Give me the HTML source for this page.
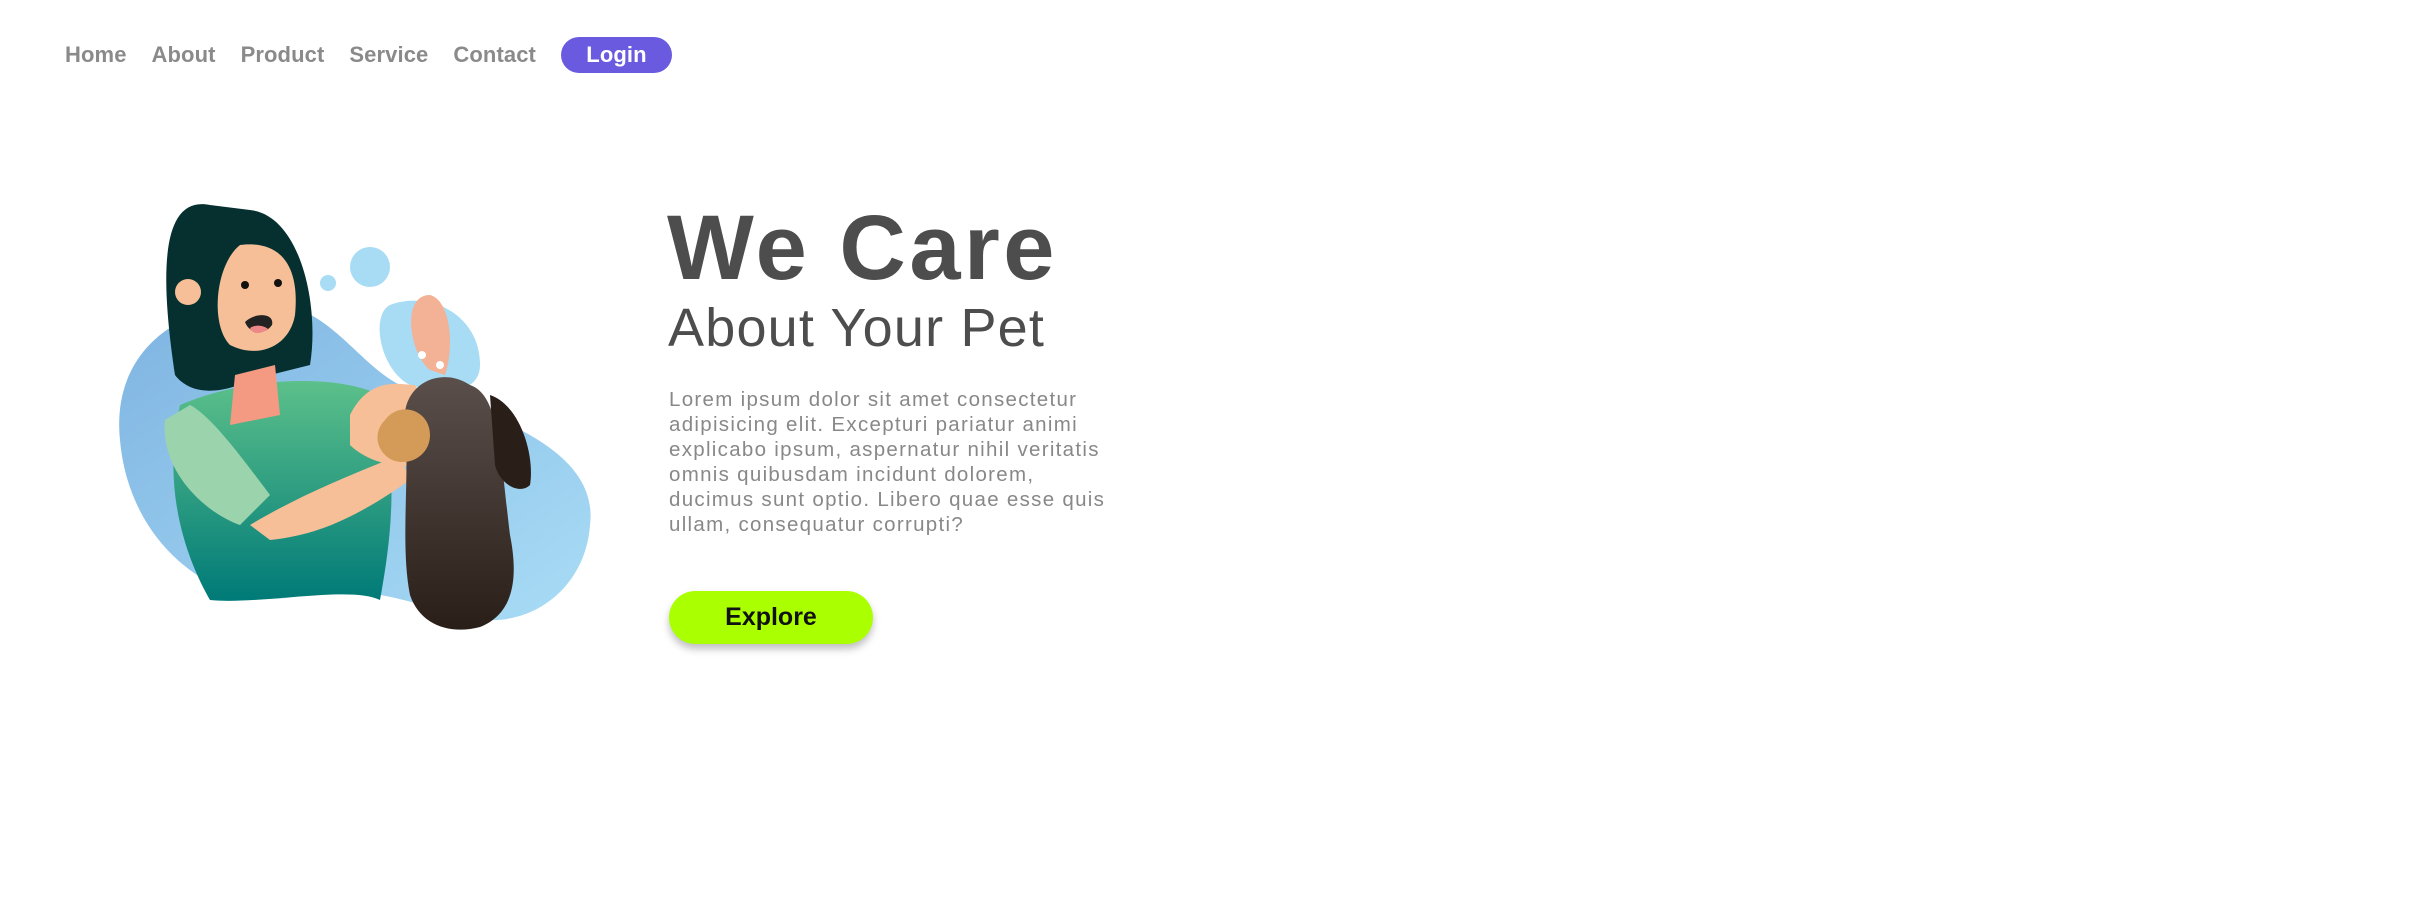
<!DOCTYPE html>
<html><head><meta charset="utf-8"><style>
*{margin:0;padding:0;box-sizing:border-box}
body{width:2428px;height:911px;background:#fff;font-family:"Liberation Sans",sans-serif;position:relative;overflow:hidden}
nav{position:absolute;left:65px;top:37px;height:36px;display:flex;align-items:center;gap:25px;font-size:22px;font-weight:bold;color:#8a8a8a;letter-spacing:0.1px}
nav .login{background:#6a5ae0;color:#fff;border-radius:18px;width:111px;height:36px;display:flex;align-items:center;justify-content:center}
h1{position:absolute;left:667px;top:198px;font-size:92px;font-weight:900;color:#4d4d4d;letter-spacing:3.5px;line-height:100px}
h2{position:absolute;left:668px;top:296px;font-size:54px;font-weight:normal;color:#4d4d4d;line-height:64px;letter-spacing:1.2px}
p{position:absolute;left:669px;top:387px;width:450px;font-size:20.5px;line-height:25px;color:#888;letter-spacing:1.3px}
.btn{position:absolute;left:669px;top:591px;width:204px;height:53px;border-radius:27px;background:#aaff00;box-shadow:0 5px 8px rgba(0,0,0,.25);font-weight:bold;font-size:25px;display:flex;align-items:center;justify-content:center;color:#111}
svg{position:absolute;left:100px;top:195px}
</style></head><body>
<nav><span>Home</span><span>About</span><span>Product</span><span>Service</span><span>Contact</span><span class="login">Login</span></nav>
<svg width="500" height="440" viewBox="0 0 500 440">
<defs><linearGradient id="b" x1="0" y1="0" x2="1" y2="1"><stop offset="0" stop-color="#7fb4e2"/><stop offset="1" stop-color="#a8dcf5"/></linearGradient>
<linearGradient id="g" x1="0" y1="0" x2="0" y2="1"><stop offset="0" stop-color="#5cc08a"/><stop offset="1" stop-color="#007a78"/></linearGradient>
<linearGradient id="d" x1="0" y1="0" x2="0" y2="1"><stop offset="0" stop-color="#5a4f4b"/><stop offset="1" stop-color="#2a1e18"/></linearGradient></defs>
<path d="M20 245 C10 150 90 100 180 110 C230 115 260 170 300 190 C380 215 500 250 490 330 C485 400 420 440 360 420 C300 405 270 390 200 400 C130 420 30 360 20 245Z" fill="url(#b)"/>
<path d="M290 110 C330 95 380 120 380 170 C380 200 340 200 310 190 C280 175 270 120 290 110Z" fill="#a8dcf5"/>
<circle cx="270" cy="72" r="20" fill="#a8dcf5"/><circle cx="228" cy="88" r="8" fill="#a8dcf5"/>
<path d="M80 210 C60 300 90 370 110 405 C160 410 250 390 280 405 C290 350 300 280 280 200 C240 180 150 180 80 210Z" fill="url(#g)"/>
<path d="M65 225 C60 280 110 320 140 330 L170 300 C140 260 110 220 90 210Z" fill="#9bd4ac"/>
<path d="M110 10 C60 0 60 80 75 180 C90 200 120 200 150 185 L210 170 C220 110 200 20 150 15Z" fill="#05302f"/>
<path d="M135 180 L130 230 L180 220 L175 170Z" fill="#f49a83"/>
<path d="M140 50 C180 45 200 70 195 120 C190 150 160 165 130 150 C110 130 115 70 140 50Z" fill="#f7bf97"/>
<circle cx="88" cy="97" r="13" fill="#f7bf97"/>
<circle cx="145" cy="90" r="4" fill="#111"/><circle cx="178" cy="88" r="4" fill="#111"/>
<path d="M145 127 C155 117 175 118 172 130 C165 140 150 140 145 127Z" fill="#222"/><path d="M150 133 C158 128 166 132 168 134 C160 140 152 139 150 133Z" fill="#e88"/>
<path d="M150 330 C200 300 250 280 300 260 L310 285 C260 320 220 340 170 345Z" fill="#f7bf97"/>
<path d="M250 220 C270 180 300 190 315 190 C330 215 345 230 340 260 C315 280 270 270 250 250Z" fill="#f7bf97"/>
<path d="M330 175 C310 160 300 100 330 100 C350 105 355 150 345 180Z" fill="#f3b195"/>
<path d="M305 230 C300 190 340 170 370 190 C400 200 400 260 410 340 C420 390 410 420 380 432 C350 440 320 430 310 400 C300 350 310 280 305 230Z" fill="url(#d)"/>
<path d="M285 225 C300 205 330 215 330 240 C330 265 300 275 285 260 C275 250 275 235 285 225Z" fill="#d49a58"/>
<circle cx="322" cy="160" r="4" fill="#fff"/><circle cx="340" cy="170" r="4" fill="#fff"/>
<path d="M390 200 C420 210 435 260 430 290 C420 300 400 290 395 270Z" fill="#2a1e18"/>
</svg>
<h1>We Care</h1>
<h2>About Your Pet</h2>
<p>Lorem ipsum dolor sit amet consectetur adipisicing elit. Excepturi pariatur animi explicabo ipsum, aspernatur nihil veritatis omnis quibusdam incidunt dolorem, ducimus sunt optio. Libero quae esse quis ullam, consequatur corrupti?</p>
<div class="btn">Explore</div>
</body></html>
